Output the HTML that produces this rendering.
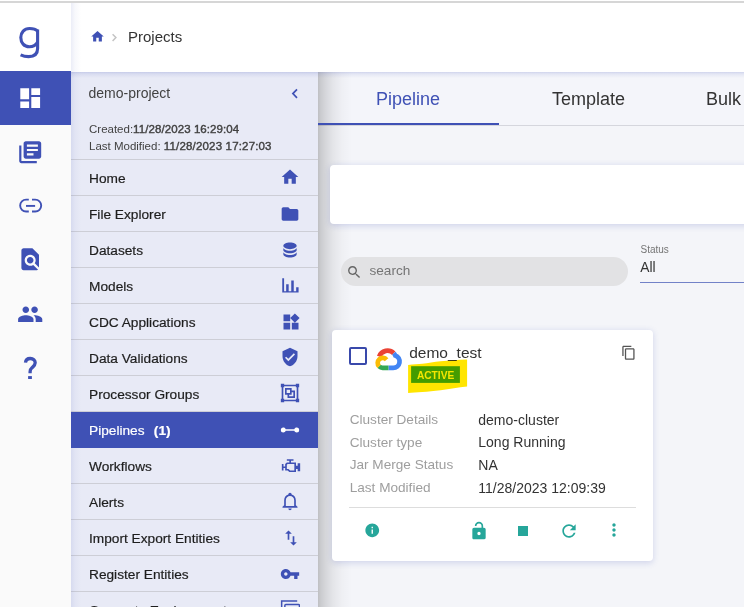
<!DOCTYPE html>
<html><head><meta charset="utf-8">
<style>
*{margin:0;padding:0;box-sizing:border-box}
html,body{width:744px;height:607px;overflow:hidden;background:#f3f4f9;font-family:"Liberation Sans",sans-serif;position:relative}
.abs{position:absolute}
#topline{left:0;top:1px;width:744px;height:2px;background:#d6d6d6;box-shadow:0 -1px 0 #fff}
#rail{left:0;top:3px;width:71px;height:604px;background:#fafafa}
#railtop{left:0;top:3px;width:71px;height:68px;background:#fff}
#header{left:71px;top:3px;width:673px;height:69px;background:#fff}
#side{left:71px;top:72px;width:247px;height:535px;background:#e8eaf6}
.ico{position:absolute;display:block}
.rail-active{left:0;top:71px;width:71px;height:54px;background:#3f51b5}
.txt{position:absolute;white-space:nowrap;line-height:1}
.nav{position:absolute;left:0;width:247px;height:36px;border-bottom:1px solid #cdced6}
.nav span{position:absolute;left:18px;top:11.5px;font-size:13.7px;color:#1e1e1e;-webkit-text-stroke:0.2px #1e1e1e;white-space:nowrap;line-height:1}
.nav svg{position:absolute;left:209px;top:8px;width:20px;height:20px;fill:#3f51b5}
.nav.act{background:#3f51b5;border-bottom-color:#3f51b5}
.nav.act span{color:#fff;-webkit-text-stroke:0.2px #fff}
.nav.act svg{fill:#fff}
</style></head><body>
<div id="topline" class="abs"></div>
<div id="rail" class="abs"></div>
<div id="railtop" class="abs"></div>
<div id="header" class="abs">
  <svg class="ico" style="left:18.6px;top:26.2px;width:15px;height:15px" viewBox="0 0 24 24" fill="#3f51b5"><path d="M10 20v-6h4v6h5v-8h3L12 3 2 12h3v8z"/></svg>
  <svg class="ico" style="left:37px;top:27px;width:14px;height:14px" viewBox="0 0 14 14"><path d="M4.6 4.2 L7.9 7.6 L4.6 11" fill="none" stroke="#c4c4c4" stroke-width="1.5"/></svg>
  <div class="txt" style="left:57px;top:26.3px;font-size:15px;color:#333">Projects</div>
</div>
<div class="abs rail-active"></div>

<!-- logo g -->
<svg class="ico" style="left:0;top:0;width:71px;height:71px" viewBox="0 0 71 71">
<path d="M37.6 29.5 L37.6 48.5 C37.6 54.5 33.8 56.6 28.6 56.6 C25.6 56.6 23 56 20.6 54.9" fill="none" stroke="#3f51b5" stroke-width="3.1"/>
<path d="M37.6 31.2 C35.8 29.2 33 28.5 29.5 28.5 C24.2 28.5 20.8 32.5 20.8 37.6 C20.8 42.8 24.2 46.8 29.3 46.8 C33 46.8 36 45 37.6 42" fill="none" stroke="#3f51b5" stroke-width="3.1"/>
</svg>

<!-- rail icons -->
<svg class="ico" style="left:17.3px;top:84.5px;width:26.4px;height:26.4px" viewBox="0 0 24 24" fill="#fff"><path d="M3 13h8V3H3v10zm0 8h8v-6H3v6zm10 0h8V11h-8v10zm0-18v6h8V3h-8z"/></svg>
<svg class="ico" style="left:17.3px;top:139px;width:26.4px;height:26.4px" viewBox="0 0 24 24" fill="#3f51b5"><path d="M4 6H2v14c0 1.1.9 2 2 2h14v-2H4V6zm16-4H8c-1.1 0-2 .9-2 2v12c0 1.1.9 2 2 2h12c1.1 0 2-.9 2-2V4c0-1.1-.9-2-2-2zm-1 9H9V9h10v2zm-4 4H9v-2h6v2zm4-8H9V5h10v2z"/></svg>
<svg class="ico" style="left:0;top:190px;width:71px;height:30px" viewBox="0 190 71 30"><g fill="none" stroke="#3f51b5" stroke-width="1.9"><path d="M28.8 199.65 H26.1 A5.95 5.95 0 0 0 26.1 211.55 H28.8"/><path d="M32 199.65 H35.25 A5.95 5.95 0 0 1 35.25 211.55 H32"/><path d="M26 205.9 H35.1"/></g></svg>
<svg class="ico" style="left:17.3px;top:246.3px;width:26.4px;height:26.4px" viewBox="0 0 24 24" fill="#3f51b5"><path d="M20 19.59V8l-6-6H6c-1.1 0-1.99.9-1.99 2L4 20c0 1.1.89 2 1.99 2H18c.45 0 .85-.15 1.19-.4l-4.43-4.43c-.8.52-1.74.83-2.76.83-2.76 0-5-2.24-5-5s2.24-5 5-5 5 2.24 5 5c0 1.02-.31 1.96-.83 2.75L20 19.59zM9 13c0 1.66 1.340 3 3 3s3-1.34 3-3-1.34-3-3-3-3 1.34-3 3z"/></svg>
<svg class="ico" style="left:17.3px;top:301.2px;width:26.4px;height:26.4px" viewBox="0 0 24 24" fill="#3f51b5"><path d="M16 11c1.66 0 2.99-1.34 2.99-3S17.66 5 16 5c-1.66 0-3 1.34-3 3s1.34 3 3 3zm-8 0c1.66 0 2.99-1.34 2.99-3S9.66 5 8 5C6.34 5 5 6.34 5 8s1.34 3 3 3zm0 2c-2.330 0-7 1.17-7 3.5V19h14v-2.5c0-2.33-4.67-3.5-7-3.5zm8 0c-.29 0-.62.02-.97.05 1.16.84 1.97 1.97 1.97 3.45V19h6v-2.5c0-2.33-4.67-3.5-7-3.5z"/></svg>
<svg class="ico" style="left:15px;top:350px;width:30px;height:35px" viewBox="0 0 30 35"><path d="M10.5 12.6 C10.7 9.5 12.6 8.5 15.3 8.5 C18.3 8.5 20.2 10.4 20.2 12.8 C20.2 15.2 18.6 16.4 17.2 17.6 C15.8 18.8 15.1 19.8 15.1 21.7 L15.1 23.3" fill="none" stroke="#3f51b5" stroke-width="3.3"/><rect x="13.1" y="26.1" width="3.8" height="2.9" fill="#3f51b5"/></svg>


<div id="main" class="abs" style="left:318px;top:72px;width:426px;height:535px;background:#f4f5f9">
  <div class="abs" style="left:0;top:0;width:426px;height:54px;background:#f4f5fa;border-bottom:1px solid #d5d6dd"></div>
  <div class="abs" style="left:0;top:0;width:34px;height:535px;background:linear-gradient(to right,rgba(0,0,0,.22) 0px,rgba(0,0,0,.17) 3px,rgba(0,0,0,.12) 8px,rgba(0,0,0,.065) 15px,rgba(0,0,0,.025) 24px,rgba(0,0,0,0) 34px)"></div>
  <div class="abs" style="left:0;top:50.9px;width:180.5px;height:2.2px;background:#3f51b5"></div>
  <div class="txt" style="left:58px;top:18px;font-size:18px;color:#3f51b5">Pipeline</div>
  <div class="txt" style="left:234px;top:18px;font-size:18px;color:#333">Template</div>
  <div class="txt" style="left:388px;top:18px;font-size:18px;color:#333">Bulk Upload</div>
  <div class="abs" style="left:12px;top:93px;width:430px;height:59px;background:#fff;border-radius:4px;box-shadow:0 1.5px 6px rgba(63,81,181,.2)"></div>
  <div class="abs" style="left:23px;top:185px;width:287px;height:29px;background:#e2e2e4;border-radius:15px"></div>
  <svg class="ico" style="left:28px;top:191.5px;width:16.5px;height:16.5px" viewBox="0 0 24 24" fill="#666"><path d="M15.5 14h-.79l-.28-.27C15.41 12.59 16 11.11 16 9.5 16 5.91 13.09 3 9.5 3S3 5.910 3 9.5 5.91 16 9.5 16c1.61 0 3.09-.59 4.23-1.57l.27.28v.79l5 4.99L20.49 19l-4.99-5zm-6 0C7.01 14 5 11.99 5 9.5S7.01 5 9.5 5 14 7.01 14 9.5 11.99 14 9.5 14z"/></svg>
  <div class="txt" style="left:51.5px;top:192.3px;font-size:13.6px;color:#757575">search</div>
  <div class="txt" style="left:322.5px;top:173px;font-size:10px;color:#757575">Status</div>
  <div class="txt" style="left:322.3px;top:188.8px;font-size:13.8px;color:#333">All</div>
  <div class="abs" style="left:322px;top:209.7px;width:120px;height:1px;background:#7282c8"></div>
</div>
<div id="side" class="abs">
  <div class="txt" style="left:17.5px;top:14px;font-size:14px;color:#424242">demo-project</div>
  <svg class="ico" style="left:211px;top:12px;width:20px;height:20px" viewBox="211 12 20 20"><path d="M226 17.4 L221.9 21.6 L226 25.8" fill="none" stroke="#3f51b5" stroke-width="1.7"/></svg>
  <div class="txt" style="left:18px;top:51.5px;font-size:11.5px;color:#424242">Created:<b style="font-weight:normal;-webkit-text-stroke:0.4px #424242;letter-spacing:0.08px">11/28/2023 16:29:04</b></div>
  <div class="txt" style="left:18px;top:68.9px;font-size:11.5px;color:#424242">Last Modified: <b style="font-weight:normal;-webkit-text-stroke:0.4px #424242;letter-spacing:0.17px">11/28/2023 17:27:03</b></div>
  <div style="position:absolute;left:0;top:87px;width:247px;height:1px;background:#cdced6"></div>
  <div class="nav" style="top:88px"><span>Home</span><svg viewBox="0 0 24 24" style="top:6.8px"><path d="M10 20v-6h4v6h5v-8h3L12 3 2 12h3v8z"/></svg></div>
  <div class="nav" style="top:124px"><span>File Explorer</span><svg viewBox="0 0 24 24"><path d="M10 4H4c-1.1 0-1.99.9-1.99 2L2 18c0 1.1.9 2 2 2h16c1.1 0 2-.9 2-2V8c0-1.1-.9-2-2-2h-8l-2-2z"/></svg></div>
  <div class="nav" style="top:160px"><span>Datasets</span><svg viewBox="0 0 24 24"><path d="M12,3C7.58,3 4,4.79 4,7C4,9.21 7.580,11 12,11C16.42,11 20,9.21 20,7C20,4.79 16.42,3 12,3M4,9V12C4,14.21 7.58,16 12,16C16.42,16 20,14.21 20,12V9C20,11.21 16.42,13 12,13C7.58,13 4,11.21 4,9M4,14V17C4,19.21 7.58,21 12,21C16.42,21 20,19.21 20,17V14C20,16.21 16.42,18 12,18C7.58,18 4,16.21 4,14Z"/></svg></div>
  <div class="nav" style="top:196px"><span>Models</span><svg viewBox="0 0 24 24"><path d="M2.7 2.7h2.2v17H2.7zM2.7 18.4h19.6v1.3H2.7zM7.4 9.9h3v9h-3zM13.5 5.5h3v13.4h-3zM19.4 13.5h2.9v5.4h-2.9z"/></svg></div>
  <div class="nav" style="top:232px"><span>CDC Applications</span><svg viewBox="0 0 24 24" style="left:209.6px;top:7.5px"><path d="M13 13v8h8v-8h-8zM3 21h8v-8H3v8zM3 3v8h8V3H3zm13.66-1.31L11 7.34 16.66 13l5.66-5.66-5.66-5.65z"/></svg></div>
  <div class="nav" style="top:268px"><span>Data Validations</span><svg viewBox="0 0 24 24" style="left:209.4px;top:7.4px"><path d="M12 1L3 5v6c0 5.55 3.84 10.74 9 12 5.16-1.26 9-6.45 9-12V5l-9-4zm-2 16l-4-4 1.41-1.41L10 14.17l6.59-6.59L18 9l-8 8z"/></svg></div>
  <div class="nav" style="top:304px"><span>Processor Groups</span><svg viewBox="0 0 24 24" style="left:209.4px;top:7.4px"><path d="M1,1V5H2V19H1V23H5V22H19V23H23V19H22V5H23V1H19V2H5V1M5,4H19V5H20V19H19V20H5V19H4V5H5M6,6V14H9V18H18V9H14V6M8,8H12V12H8M14,11H16V16H11V14H14"/></svg></div>
  <div class="nav act" style="top:340px"><span>Pipelines<b style="margin-left:9.3px">(1)</b></span><svg viewBox="0 0 24 24" style="top:7.5px"><path d="M4,9C5.31,9 6.42,9.83 6.83,11H17.17C17.58,9.83 18.69,9 20,9A3,3 0 0,1 23,12A3,3 0 0,1 20,15C18.69,15 17.58,14.17 17.17,13H6.83C6.42,14.17 5.31,15 4,15A3,3 0 0,1 1,12A3,3 0 0,1 4,9Z"/></svg></div>
  <div class="nav" style="top:376px"><span>Workflows</span><svg viewBox="0 0 24 24" preserveAspectRatio="none" style="left:209.6px;top:7.6px;height:19.35px"><path d="M8,10H16V18H11L9,16H7V11M7,4V6H10V8H7L5,10V13H3V10H1V18H3V15H5V18H8L10,20H18V16H20V19H23V9H20V12H18V8H12V6H15V4H7Z"/></svg></div>
  <div class="nav" style="top:412px"><span>Alerts</span><svg viewBox="0 0 24 24" style="top:7.3px"><path d="M21,19V20H3V19L5,17V11C5,7.9 7.03,5.17 10,4.29C10,4.19 10,4.1 10,4A2,2 0 0,1 12,2A2,2 0 0,1 14,4C14,4.1 14,4.19 14,4.29C16.97,5.17 19,7.9 19,11V17L21,19M14,21A2,2 0 0,1 12,23A2,2 0 0,1 10,21M17,11A5,5 0 0,0 12,6A5,5 0 0,0 7,11V18H17V11Z"/></svg></div>
  <div class="nav" style="top:448px"><span>Import Export Entities</span><svg viewBox="0 0 24 24" style="left:210px;top:7.6px"><path d="M9 3L5 6.99h3V14h2V6.99h3L9 3zm7 14.01V10h-2v7.01h-3L15 21l4-3.99h-3z"/></svg></div>
  <div class="nav" style="top:484px"><span>Register Entities</span><svg viewBox="0 0 24 24"><path d="M12.65 10C11.83 7.67 9.61 6 7 6c-3.31 0-6 2.69-6 6s2.69 6 6 6c2.61 0 4.830-1.67 5.65-4H17v4h4v-4h2v-4H12.65zM7 14c-1.1 0-2-.9-2-2s.9-2 2-2 2 .9 2 2-.9 2-2 2z"/></svg></div>
  <div class="nav" style="top:520px"><span>Generate Environment</span><svg viewBox="0 0 20 20" style="fill:none;stroke:#3f51b5;stroke-width:1.5"><path d="M1.65 20 V1.05 H17.2"/><rect x="4.85" y="4.55" width="14.6" height="14" rx="1"/></svg></div>
</div>

<div id="card" class="abs" style="left:332px;top:330px;width:320.5px;height:230.5px;background:#fff;border-radius:4px;box-shadow:0 1.5px 6px rgba(63,81,181,.2)">
  <div class="abs" style="left:17.2px;top:17.2px;width:17.8px;height:17.8px;border:2px solid #3949ab;border-radius:2px"></div>
  <svg class="ico" style="left:38px;top:12px;width:36px;height:32px" viewBox="0 0 36 32">
    <g fill="none" stroke-width="4.7">
      <path d="M9.18 14.47 A8.85 8.85 0 0 1 23.76 11.24" stroke="#ea4335"/>
      <path d="M23.76 11.24 A8.85 8.85 0 0 1 25.3 13.5 A6.35 6.35 0 0 1 23.2 25.85 L18.45 25.85" stroke="#4285f4"/>
      <path d="M18.45 25.85 L12.65 25.85 A5 5 0 0 1 9.11 24.39" stroke="#34a853"/>
      <path d="M9.11 24.39 A5 5 0 1 1 16.59 17.77" stroke="#fbbc04"/>
    </g>
  </svg>
  <div class="txt" style="left:77.2px;top:15px;font-size:15.5px;color:#333">demo_test</div>
  <svg class="ico" style="left:288.8px;top:15.4px;width:15.5px;height:15.5px" viewBox="0 0 24 24" fill="#555"><path d="M16 1H4c-1.1 0-2 .9-2 2v14h2V3h12V1zm3 4H8c-1.1 0-2 .9-2 2v14c0 1.1.9 2 2 2h11c1.1 0 2-.9 2-2V7c0-1.1-.9-2-2-2zm0 16H8V7h11v14z"/></svg>
  <div class="txt" style="left:17.7px;top:78.8px;font-size:13.6px;color:#9e9e9e;line-height:22.8px">Cluster Details<br>Cluster type<br>Jar Merge Status<br>Last Modified</div>
  <div class="txt" style="left:146.3px;top:78.5px;font-size:14px;color:#333;line-height:22.8px">demo-cluster<br>Long Running<br>NA<br>11/28/2023 12:09:39</div>
  <div class="abs" style="left:16.6px;top:177px;width:287.4px;height:1px;background:#ddd"></div>
  <svg class="ico" style="left:31.65px;top:191.75px;width:16.5px;height:16.5px" viewBox="0 0 24 24" fill="#26a69a"><path d="M12 2C6.48 2 2 6.48 2 12s4.48 10 10 10 10-4.48 10-10S17.52 2 12 2zm1 15h-2v-6h2v6zm0-8h-2V7h2v2z"/></svg>
  <svg class="ico" style="left:136.5px;top:190.8px;width:20px;height:20px" viewBox="0 0 24 24" fill="#26a69a"><path d="M18,8A2,2 0 0,1 20,10V20A2,2 0 0,1 18,22H6C4.89,22 4,21.1 4,20V10A2,2 0 0,1 6,8H15V6A3,3 0 0,0 12,3A3,3 0 0,0 9,6H7A5,5 0 0,1 12,1A5,5 0 0,1 17,6V8H18M12,17A2,2 0 0,0 14,15A2,2 0 0,0 12,13A2,2 0 0,0 10,15A2,2 0 0,0 12,17Z"/></svg>
  <svg class="ico" style="left:181.4px;top:190.6px;width:20px;height:20px" viewBox="0 0 24 24" fill="#26a69a"><path d="M6 6h12v12H6z"/></svg>
  <svg class="ico" style="left:226.5px;top:190.6px;width:20px;height:20px" viewBox="0 0 24 24" fill="#26a69a"><path d="M17.65 6.35C16.2 4.9 14.21 4 12 4c-4.42 0-7.99 3.58-7.99 8s3.57 8 7.99 8c3.73 0 6.84-2.55 7.73-6h-2.08c-.82 2.33-3.04 4-5.65 4-3.31 0-6-2.69-6-6s2.69-6 6-6c1.66 0 3.14.69 4.22 1.78L13 11h7V4l-2.35 2.35z"/></svg>
  <svg class="ico" style="left:271.7px;top:190.4px;width:20px;height:20px" viewBox="0 0 24 24" fill="#26a69a"><path d="M12 8c1.1 0 2-.9 2-2s-.9-2-2-2-2 .9-2 2 .9 2 2 2zm0 2c-1.1 0-2 .9-2 2s.9 2 2 2 2-.9 2-2-.9-2-2-2zm0 6c-1.1 0-2 .9-2 2s.9 2 2 2 2-.9 2-2-.9-2-2-2z"/></svg>
</div>
<svg class="abs" style="left:0;top:0;width:744px;height:607px;mix-blend-mode:multiply" viewBox="0 0 744 607">
  <path d="M408.1 364.9 C414 364.4 418 364 422.3 363.7 C428 363 434 361.8 440.6 361.2 C450 360.3 458 359.8 467.1 359.4 L467.1 386.5 C458 387.6 450 389 440.6 390.2 C434 391 428 391.6 422.3 392 C417 392.4 412 392.7 408.1 392.9 Z" fill="#ffe500"/>
  <rect x="411.1" y="366.2" width="48.8" height="16.7" fill="#449c00" />
</svg>
<div class="txt" style="left:416.9px;top:370.9px;font-size:10.2px;font-weight:bold;color:#f5e600">ACTIVE</div>


<div class="abs" style="left:71px;top:72px;width:673px;height:6px;background:linear-gradient(to bottom,rgba(63,81,181,.20),rgba(63,81,181,.09) 2px,rgba(63,81,181,0))"></div>
<div class="abs" style="left:71px;top:3px;width:10px;height:604px;background:linear-gradient(to right,rgba(63,81,181,.10),rgba(63,81,181,.04) 4px,rgba(63,81,181,0))"></div>
</body></html>
